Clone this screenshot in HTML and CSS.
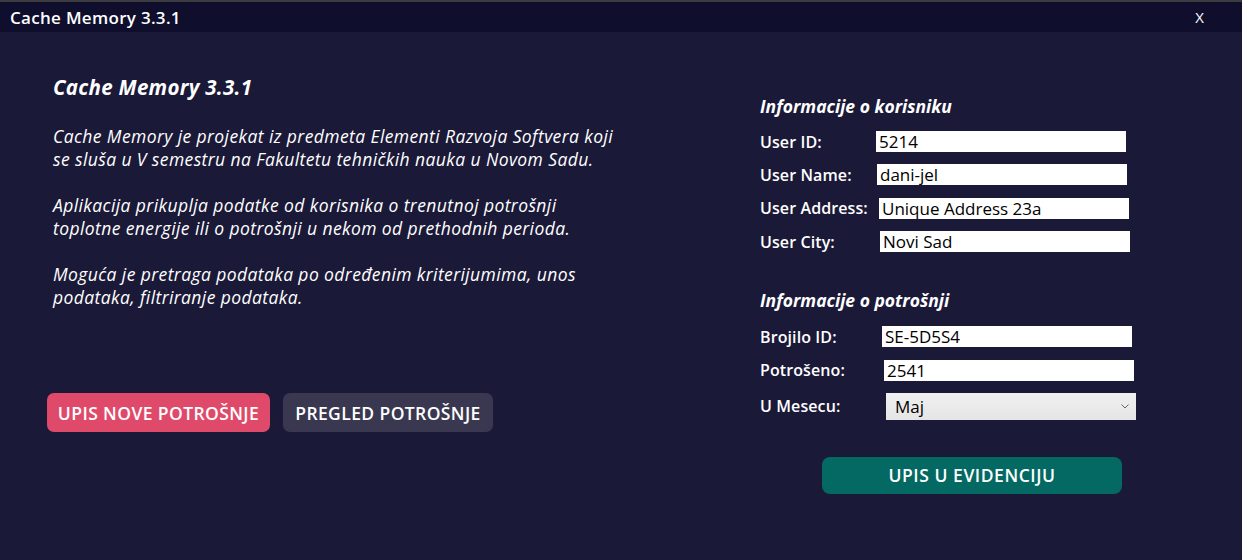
FILE: index.html
```html
<!DOCTYPE html>
<html>
<head>
<meta charset="utf-8">
<link rel="stylesheet" href="styles.css">
</head>
<body>
<div class="topline"></div>
<header class="titlebar">
  <span class="title">Cache Memory 3.3.1</span>
  <span class="close">X</span>
</header>
<main class="main">
  <section class="left">
    <h1 class="heading">Cache Memory 3.3.1</h1>
    <div class="desc">
      <p>Cache Memory je projekat iz predmeta Elementi Razvoja Softvera koji<br>se sluša u V semestru na Fakultetu tehničkih nauka u Novom Sadu.</p>
      <p>Aplikacija prikuplja podatke od korisnika o trenutnoj potrošnji<br>toplotne energije ili o potrošnji u nekom od prethodnih perioda.</p>
      <p>Moguća je pretraga podataka po određenim kriterijumima, unos<br>podataka, filtriranje podataka.</p>
    </div>
    <div class="actions">
      <button class="btn btn-pink">UPIS NOVE POTROŠNJE</button>
      <button class="btn btn-gray">PREGLED POTROŠNJE</button>
    </div>
  </section>
  <section class="right">
    <h2 class="sub">Informacije o korisniku</h2>
    <div class="rows">
      <div class="row"><label class="lbl">User ID:</label><input class="field f1" value="5214"></div>
      <div class="row"><label class="lbl">User Name:</label><input class="field f2" value="dani-jel"></div>
      <div class="row"><label class="lbl">User Address:</label><input class="field f3" value="Unique Address 23a"></div>
      <div class="row"><label class="lbl">User City:</label><input class="field f4" value="Novi Sad"></div>
    </div>
    <h2 class="sub sub2">Informacije o potrošnji</h2>
    <div class="rows rows2">
      <div class="row"><label class="lbl">Brojilo ID:</label><input class="field f5" value="SE-5D5S4"></div>
      <div class="row"><label class="lbl">Potrošeno:</label><input class="field f6" value="2541"></div>
      <div class="row row-sel"><label class="lbl">U Mesecu:</label>
        <div class="select f7"><span>Maj</span>
          <svg class="chev" width="8" height="5" viewBox="0 0 8 5"><path d="M0.5 0.5 L4 4 L7.5 0.5" fill="none" stroke="#666" stroke-width="1"/></svg>
        </div>
      </div>
    </div>
    <button class="btn btn-teal">UPIS U EVIDENCIJU</button>
  </section>
</main>
</body>
</html>
```

FILE: styles.css
```css
* { box-sizing: border-box; }
html, body { margin: 0; padding: 0; }
body {
  width: 1242px;
  height: 560px;
  overflow: hidden;
  background: #1b1938;
  font-family: "Open Sans", "Noto Sans", sans-serif;
  color: #fff;
}
.topline { height: 2px; background: #3c3c40; }
.titlebar {
  height: 30px;
  background: #0f0e2d;
  display: flex;
  align-items: center;
  justify-content: space-between;
  padding: 0 38px 0 10px;
}
.title { font-weight: 600; font-size: 17px; letter-spacing: 0.3px; }
.close { font-size: 15px; font-weight: 400; }
.main { display: flex; }
.left { width: 760px; padding: 0 0 0 53px; }
.heading {
  margin: 42px 0 0;
  font-size: 20.5px;
  font-weight: 700;
  font-style: italic;
  line-height: 26px;
  letter-spacing: 0.3px;
}
.desc { margin-top: 25px; font-style: italic; font-size: 17.5px; line-height: 23px; letter-spacing: 0.4px; }
.desc p { margin: 0 0 23px; white-space: nowrap; }
.actions { display: flex; gap: 13px; margin-top: 84px; margin-left: -6px; }
.btn {
  border: none;
  color: #fff;
  font-family: inherit;
  font-weight: 600;
  font-size: 17.5px;
  letter-spacing: 0.4px;
  height: 39px;
  border-radius: 7px;
  padding: 0;
}
.btn-pink { background: #e04a6a; width: 223px; }
.btn-gray { background: #393850; width: 210px; }
.right { padding-top: 62px; width: 400px; }
.sub {
  margin: 0;
  font-size: 17.5px;
  font-weight: 700;
  font-style: italic;
  line-height: 24px;
  letter-spacing: 0;
}
.sub2 { margin-top: 36px; }
.rows { display: flex; flex-direction: column; gap: 12.4px; margin-top: 13px; }
.rows2 { margin-top: 14px; }
.row { display: flex; align-items: center; height: 21px; }
.row-sel { height: 27px; }
.lbl { width: 116px; font-weight: 600; font-size: 16px; letter-spacing: 0.1px; }
.field {
  width: 250px;
  height: 21px;
  border: none;
  outline: none;
  background: #fff;
  color: #000;
  font-family: inherit;
  font-size: 17px;
  padding: 0 3px;
  line-height: 21px;
}
.f2 { margin-left: 1px; }
.f3 { margin-left: 3px; }
.f4 { margin-left: 4px; }
.f5 { margin-left: 6px; }
.f6 { margin-left: 8px; }
.f7 { margin-left: 10px; }
.select {
  width: 250px;
  height: 27px;
  background: linear-gradient(#f0f0f0, #e5e5e5);
  color: #000;
  display: flex;
  align-items: center;
  justify-content: space-between;
  padding: 0 7px 0 9px;
  font-size: 17px;
  font-weight: 500;
}
.btn-teal { background: #036962; width: 300px; height: 37px; margin: 37px 0 0 62px; border-radius: 8px; letter-spacing: 0.55px; }
```
